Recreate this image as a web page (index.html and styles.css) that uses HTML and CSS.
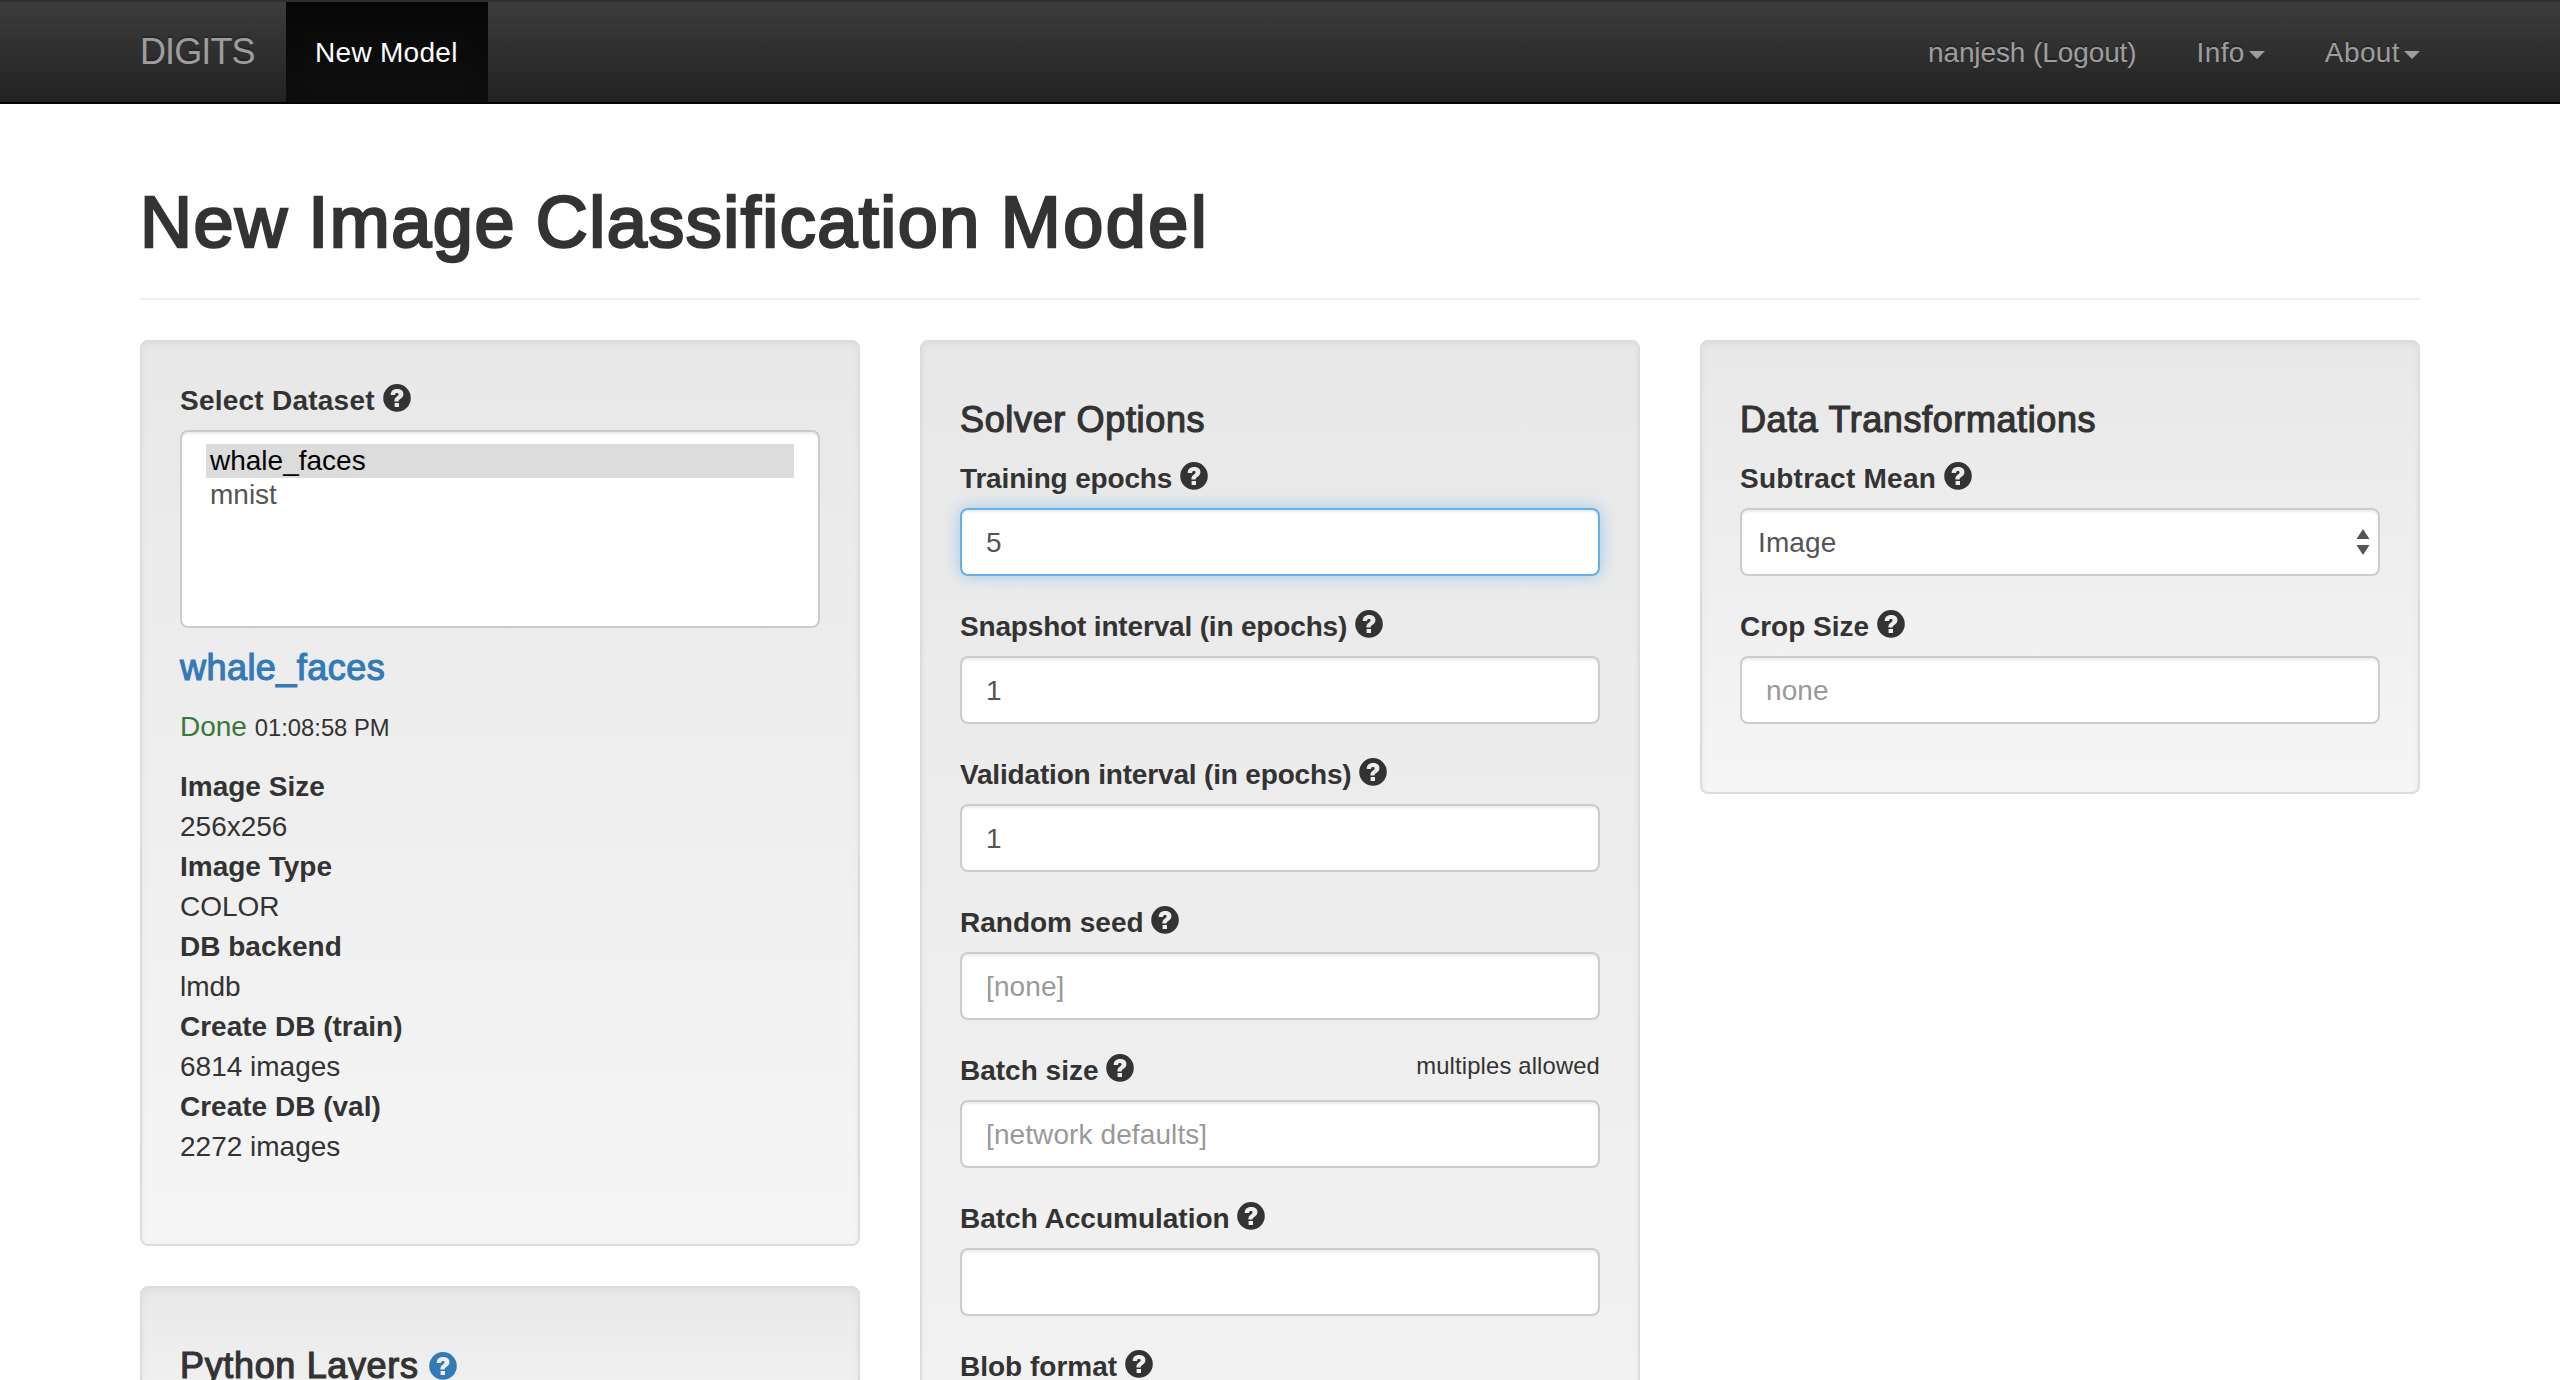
FILE: index.html
```html
<!DOCTYPE html>
<html lang="en">
<head>
<meta charset="utf-8">
<title>New Image Classification Model</title>
<link rel="stylesheet" href="styles.css">
</head>
<body>
<svg class="sprite" aria-hidden="true">
  <symbol id="help" viewBox="0 0 28 28">
    <path fill="currentColor" fill-rule="evenodd" d="M14 .1a13.8 13.8 0 1 1 0 27.6a13.8 13.8 0 0 1 0-27.6zM11.6 19v4h4.4v-4zM7.7 11h4.3c.1-1.5.7-2.1 1.8-2.1s1.8.5 1.8 1.4c0 .9-.5 1.4-1.6 2.1c-1.9 1.3-2.7 2.4-2.6 5.2h4.2c0-1.4.5-1.9 2-2.9c1.9-1.3 2.8-2.6 2.8-4.8c0-3.2-2.5-4.9-6.4-4.9c-4 0-6.3 2.2-6.3 6z"/>
  </symbol>
</svg>
<nav class="navbar">
  <div class="navbar-inner">
    <a class="brand">DIGITS</a>
    <a class="tab">New Model</a>
    <div class="nav-right">
      <a class="user">nanjesh (Logout)</a>
      <a>Info<span class="caret"></span></a>
      <a>About<span class="caret"></span></a>
    </div>
  </div>
</nav>
<main class="container">
  <h1>New Image Classification <span class="wide">Model</span></h1>
  <div class="columns">
    <div class="column">
      <section class="well">
        <div class="label loose">Select Dataset <svg class="icon"><use href="#help"/></svg></div>
        <div class="listbox">
          <div class="option selected">whale_faces</div>
          <div class="option">mnist</div>
        </div>
        <h4 class="dataset"><a>whale_faces</a></h4>
        <p class="status"><span class="done">Done</span> <small>01:08:58 PM</small></p>
        <dl>
          <dt>Image Size</dt><dd>256x256</dd>
          <dt>Image Type</dt><dd>COLOR</dd>
          <dt>DB backend</dt><dd>lmdb</dd>
          <dt>Create DB (train)</dt><dd>6814 images</dd>
          <dt>Create DB (val)</dt><dd>2272 images</dd>
        </dl>
      </section>
      <section class="well">
        <h4>Python Layers <a><svg class="icon"><use href="#help"/></svg></a></h4>
      </section>
    </div>
    <div class="column">
      <section class="well">
        <h4>Solver Options</h4>
        <div class="group">
          <div class="label tight">Training epochs <svg class="icon"><use href="#help"/></svg></div>
          <input class="control focused" value="5">
        </div>
        <div class="group">
          <div class="label tight">Snapshot interval (in epochs) <svg class="icon"><use href="#help"/></svg></div>
          <input class="control" value="1">
        </div>
        <div class="group">
          <div class="label tight">Validation interval (in epochs) <svg class="icon"><use href="#help"/></svg></div>
          <input class="control" value="1">
        </div>
        <div class="group">
          <div class="label">Random seed <svg class="icon"><use href="#help"/></svg></div>
          <input class="control" placeholder="[none]">
        </div>
        <div class="group">
          <div class="label-row">
            <div class="label">Batch size <svg class="icon"><use href="#help"/></svg></div>
            <small>multiples allowed</small>
          </div>
          <input class="control" placeholder="[network defaults]">
        </div>
        <div class="group">
          <div class="label">Batch Accumulation <svg class="icon"><use href="#help"/></svg></div>
          <input class="control">
        </div>
        <div class="group">
          <div class="label">Blob format <svg class="icon"><use href="#help"/></svg></div>
          <input class="control">
        </div>
        <div class="spacer"></div>
      </section>
    </div>
    <div class="column">
      <section class="well">
        <h4 class="transforms">Data Transformations</h4>
        <div class="group">
          <div class="label loose">Subtract Mean <svg class="icon"><use href="#help"/></svg></div>
          <div class="control select"><span>Image</span>
            <svg class="arrows" viewBox="0 0 14 26"><path fill="#555" d="M7 0l6.5 10H.5zM.5 16h13L7 26z"/></svg>
          </div>
        </div>
        <div class="group">
          <div class="label">Crop Size <svg class="icon"><use href="#help"/></svg></div>
          <input class="control" placeholder="none">
        </div>
      </section>
    </div>
  </div>
</main>
</body>
</html>
```
FILE: styles.css
```css
* { box-sizing: border-box; }
html, body { height: 1380px; overflow: hidden; }
body {
  margin: 0;
  background: #fff;
  color: #333;
  font: 28px/40px "Liberation Sans", Arial, sans-serif;
}
.sprite { display: none; }
h1, h4, p, dl, dd { margin: 0; }
h1, h4 { font-weight: 400; }
a { text-decoration: none; color: #337ab7; }

.navbar {
  height: 104px;
  border-top: 2px solid #2b3033;
  border-bottom: 2px solid #040404;
  background: linear-gradient(#3c3c3c, #222);
}
.navbar-inner {
  display: flex;
  width: 2340px;
  margin: 0 auto;
  padding-left: 30px;
  height: 100px;
}
.navbar a {
  color: #9d9d9d;
  padding: 31px 30px 29px;
  letter-spacing: .4px;
  white-space: nowrap;
  text-shadow: 0 -2px 0 rgba(0, 0, 0, .25);
}
.navbar .brand { width: 146px; padding: 30px 30px 30px 0; font-size: 36px; letter-spacing: -.9px; }
.navbar .user { letter-spacing: -.1px; }
.navbar .tab {
  width: 202px;
  padding-left: 29px;
  color: #fff;
  letter-spacing: .3px;
  background: linear-gradient(#080808, #0f0f0f);
  box-shadow: inset 0 6px 18px rgba(0, 0, 0, .25);
}
.nav-right { display: flex; margin-left: auto; }
.caret {
  display: inline-block;
  margin-left: 4px;
  vertical-align: middle;
  border: 8px solid transparent;
  border-top-color: #9d9d9d;
  border-bottom: 0;
}

.container { width: 2280px; height: 1276px; margin: 0 auto; overflow: hidden; }
h1 {
  height: 196px;
  margin-bottom: 40px;
  padding-top: 78px;
  border-bottom: 2px solid #eee;
  font-size: 72px;
  line-height: 80px;
  letter-spacing: 1.5px;
  word-spacing: -1.7px;
  -webkit-text-stroke: 2.6px #333;
}
.wide { letter-spacing: 2.5px; }
.columns { display: grid; grid-template-columns: repeat(3, 720px); gap: 60px; align-items: start; }
.column { display: grid; gap: 40px; }
.well {
  padding: 38px;
  border: 2px solid #dcdcdc;
  border-radius: 8px;
  background: linear-gradient(#e8e8e8, #f5f5f5);
  box-shadow: inset 0 2px 6px rgba(0, 0, 0, .05), 0 2px 0 rgba(255, 255, 255, .1);
}
h4 {
  height: 58px;
  margin: 20px 0 0;
  font-size: 36px;
  letter-spacing: .65px;
  -webkit-text-stroke: 1.2px currentColor;
}
.transforms { letter-spacing: .6px; }
.icon { width: 28px; height: 28px; vertical-align: -2px; }
.label { height: 40px; margin-bottom: 10px; line-height: 42px; font-weight: 700; white-space: nowrap; }
.loose { letter-spacing: .24px; }
.tight { letter-spacing: -.17px; }
.label-row { display: flex; justify-content: space-between; }
small { font-size: 23.8px; }
.label-row small { line-height: 32px; letter-spacing: .15px; }
.group { margin-bottom: 30px; }
.control, .listbox {
  display: block;
  width: 640px;
  border: 2px solid #ccc;
  border-radius: 8px;
  background: #fff;
  color: #555;
  box-shadow: inset 0 2px 2px rgba(0, 0, 0, .075);
}
.control { height: 68px; padding: 13px 24px 11px; font: inherit; line-height: 40px; letter-spacing: .1px; outline: 0; }
.control::placeholder { color: #999; opacity: 1; }
.focused {
  border-color: #66afe9;
  box-shadow: inset 0 2px 2px rgba(0, 0, 0, .075), 0 0 16px rgba(102, 175, 233, .6);
}
.select { display: flex; justify-content: space-between; padding: 13px 8px 11px 16px; }
.arrows { width: 14px; height: 26px; margin-top: 6px; }
.listbox { height: 198px; padding: 12px 24px; }
.option { height: 34px; line-height: 34px; padding-left: 4px; }
.selected { background: #dcdcdc; color: #000; }
.dataset { height: 58px; letter-spacing: .45px; }
.status { height: 60px; line-height: 42px; }
.done { color: #3c763d; }
dl { padding-top: 1px; margin-bottom: 39px; }
dt { font-weight: 700; }
.spacer { height: 200px; }
```
